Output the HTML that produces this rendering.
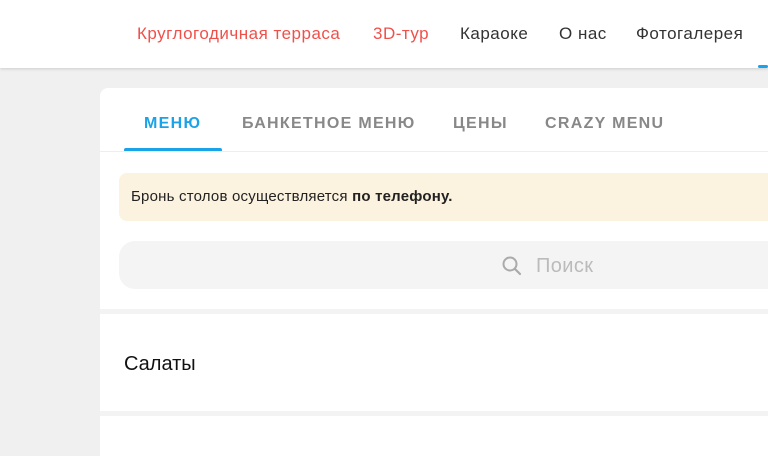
<!DOCTYPE html>
<html><head><meta charset="utf-8"><style>
*{margin:0;padding:0;box-sizing:border-box}
html,body{width:768px;height:456px;overflow:hidden}
body{background:#f0f0f0;font-family:"Liberation Sans","DejaVu Sans",sans-serif;position:relative}
.hdr{position:absolute;left:0;top:0;width:768px;height:68px;background:#fff;box-shadow:0 1px 3px rgba(0,0,0,.15)}
.nav{position:absolute;top:24px;font-size:17px;letter-spacing:.5px;color:#333;white-space:nowrap}
.red{color:#f0504a}
.card{position:absolute;left:100px;top:88px;width:668px;height:368px;background:#fff;border-radius:8px 0 0 0;overflow:hidden}
.tab{position:absolute;top:27px;font-size:16px;letter-spacing:1.3px;color:#888;font-weight:bold;white-space:nowrap}
</style></head><body>
<div class="hdr">
<span class="nav red" style="left:137px">Круглогодичная терраса</span>
<span class="nav red" style="left:373px">3D-тур</span>
<span class="nav" style="left:460px">Караоке</span>
<span class="nav" style="left:559px">О нас</span>
<span class="nav" style="left:636px">Фотогалерея</span>
<div style="position:absolute;left:758px;top:65px;width:10px;height:3px;background:#1aa3e8;border-radius:2px"></div>
</div>
<div class="card">
<span class="tab" style="left:44px;color:#1aa3e8">МЕНЮ</span>
<span class="tab" style="left:142px">БАНКЕТНОЕ МЕНЮ</span>
<span class="tab" style="left:353px">ЦЕНЫ</span>
<span class="tab" style="left:445px">CRAZY MENU</span>
<div style="position:absolute;left:24px;top:60px;width:98px;height:4px;background:#1aa3e8;border-radius:2px"></div>
<div style="position:absolute;left:0;top:63px;width:700px;height:1px;background:#eee"></div>
<div style="position:absolute;left:19px;top:85px;width:700px;height:48px;background:#fbf2df;border-radius:8px;font-size:15px;letter-spacing:.2px;color:#222;padding:15px 0 0 12px">Бронь столов осуществляется <b>по телефону.</b></div>
<div style="position:absolute;left:19px;top:153px;width:700px;height:48px;background:#f4f4f4;border-radius:16px"></div>
<svg style="position:absolute;left:401px;top:167px" width="22" height="22" viewBox="0 0 22 22"><circle cx="9" cy="9" r="6.5" fill="none" stroke="#aaa" stroke-width="2"/><line x1="14" y1="14" x2="19" y2="19" stroke="#aaa" stroke-width="2.2" stroke-linecap="round"/></svg>
<span style="position:absolute;left:436px;top:167px;font-size:20px;letter-spacing:.4px;color:#bbb">Поиск</span>
<div style="position:absolute;left:0;top:221px;width:700px;height:5px;background:#f3f3f3"></div>
<span style="position:absolute;left:24px;top:265px;font-size:20px;color:#111">Салаты</span>
<div style="position:absolute;left:0;top:323px;width:700px;height:5px;background:#f3f3f3"></div>
</div>
</body></html>
